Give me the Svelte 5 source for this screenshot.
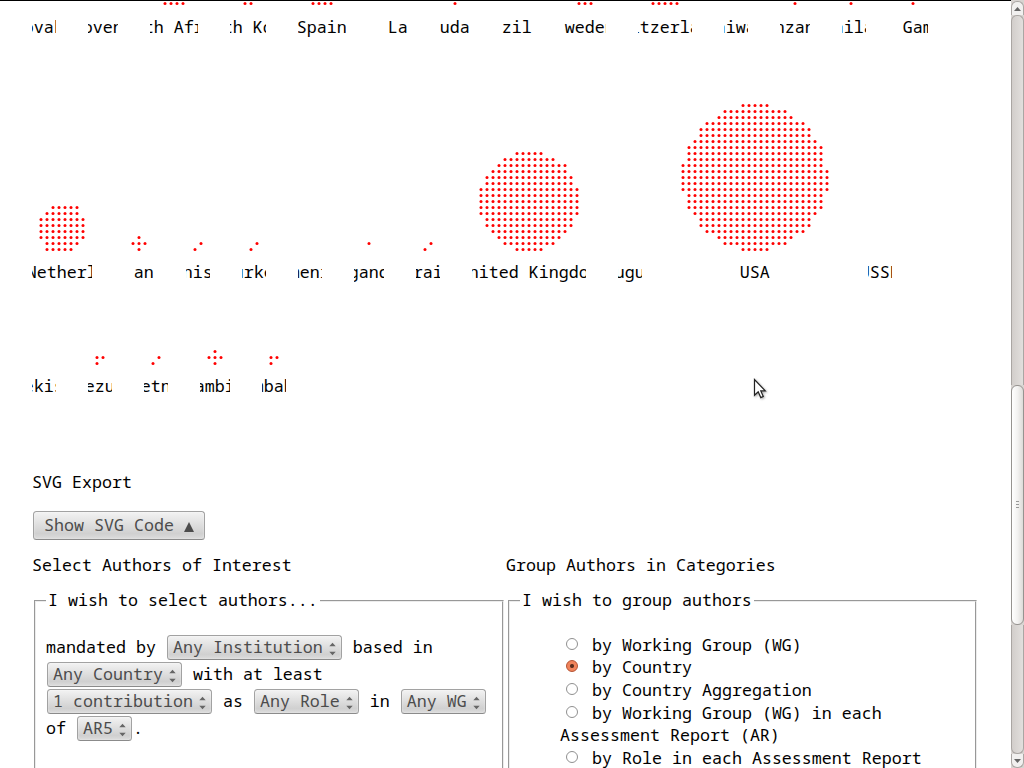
<script>
  // Inclusive column spans of each dot row, from top to bottom.
  const usa = [
    [10, 14], [7, 17], [6, 18], [4, 20], [3, 21], [3, 21], [2, 22], [1, 23], [1, 23], [1, 23],
    [0, 23], [0, 24], [0, 24], [0, 24], [0, 24], [1, 23], [1, 23], [1, 23], [2, 22],
    [3, 21], [3, 21], [4, 20], [6, 18], [7, 17], [10, 14]
  ];
  const uk = [
    [6, 10], [4, 12], [3, 14], [2, 14], [1, 15], [1, 15], [0, 16], [0, 16], [0, 16], [0, 16], [0, 16],
    [1, 15], [1, 15], [2, 14], [3, 13], [4, 12], [6, 10]
  ];
  const netherlands = [[2, 6], [1, 6], [0, 7], [0, 7], [0, 7], [0, 7], [1, 6], [1, 5]];
  const plus = [[1, 1], [0, 2], [1, 1]];
  const slash = [[1, 1], [0, 0]];
  const corner = [[0, 1], [0, 0]];

  const c = (name, width, spans = [], x = 15) => ({ name, width, spans, x });

  const rows = [
    {
      height: 60, baseline: 33, bottom: 3.5,
      items: [
        c('Slovakia', 24), c('Slovenia', 30), c('South Africa', 48, [[0, 3]]),
        c('South Korea', 36, [[0, 1]]), c('Spain', 48, [[0, 3]]), c('Sri Lanka', 30),
        c('Sudan', 30, [[0, 0]]), c('Swaziland', 30), c('Sweden', 42, [[0, 2]]),
        c('Switzerland', 54, [[0, 4]]), c('Taiwan', 24), c('Tanzania', 30, [[0, 0]]),
        c('Thailand', 24, [[0, 0]], 9), c('The Gambia', 30, [[0, 0]])
      ]
    },
    {
      height: 240, baseline: 218, bottom: 189.5,
      items: [
        c('The Netherlands', 60, netherlands, 9), c('Trinidad and Tobago', 30, plus, 9),
        c('Tunisia', 24, slash, 9), c('Turkey', 24, slash, 9), c('Turkmenistan', 24),
        c('Uganda', 30, [[0, 0], [1, 0]]), c('Ukraine', 24, slash, 9),
        c('United Kingdom', 114, uk, 9), c('Uruguay', 24), c('USA', 162, usa, 9), c('USSR', 24)
      ]
    },
    {
      height: 120, baseline: 92, bottom: 63.5,
      items: [
        c('Uzbekistan', 24), c('Venezuela', 24, corner, 9), c('Vietnam', 24, slash, 9),
        c('Zambia', 30, plus, 9), c('Zimbabwe', 24, corner, 9)
      ]
    }
  ];

  function dots(item, bottom) {
    const out = [];
    item.spans.forEach(([from, to], r) => {
      const y = bottom - (item.spans.length - 1 - r) * 6;
      for (let i = from; i <= to; i++) out.push({ x: item.x + i * 6, y });
    });
    return out;
  }

  const groupings = [
    'by Working Group (WG)',
    'by Country',
    'by Country Aggregation',
    'by Working Group (WG) in each Assessment Report (AR)',
    'by Role in each Assessment Report (AR)'
  ];
  let selected = $state(1);
</script>

{#snippet picker(label)}
  <button class="picker">{label}<svg width="7" height="14" viewBox="0 0 7 14"><path d="M0.3 4.2 3.5 0.8 6.7 4.2zM0.3 9.8 3.5 13.2 6.7 9.8z" fill="#666" /></svg></button>
{/snippet}

<div class="window">
  <main>
    {#each rows as row}
      <div class="row">
        {#each row.items as item}
          <svg class="category" width={item.width} height={row.height}>
            {#each dots(item, row.bottom) as dot}
              <circle cx={dot.x} cy={dot.y} r="1.5" />
            {/each}
            <text x={item.width / 2 - 0.3} y={row.baseline}>{item.name}</text>
          </svg>
        {/each}
      </div>
    {/each}

    <h2 class="export">SVG Export</h2>
    <button class="show">Show SVG Code <svg width="10" height="10" viewBox="0 0 10 10"><path d="M0 10 5 0 10 10z" fill="#4c4c4c" /></svg></button>

    <div class="columns">
      <section>
        <h2>Select Authors of Interest</h2>
        <fieldset>
          <legend>I wish to select authors...</legend>
          <div class="sentence">
            <div>mandated by {@render picker('Any Institution')} based in</div>
            <div>{@render picker('Any Country')} with at least</div>
            <div>{@render picker('1 contribution')} as {@render picker('Any Role')} in {@render picker('Any WG')}</div>
            <div>of {@render picker('AR5')}.</div>
          </div>
        </fieldset>
      </section>
      <section>
        <h2>Group Authors in Categories</h2>
        <fieldset>
          <legend>I wish to group authors</legend>
          <div class="options">
            {#each groupings as label, i}
              <label><input type="radio" name="group" checked={selected === i} onchange={() => (selected = i)} /> {label}</label>
            {/each}
          </div>
        </fieldset>
      </section>
    </div>
  </main>

  <div class="scrollbar">
    <div class="cap top"><svg width="7" height="4"><path d="M0 4 3.5 0 7 4z" fill="#666" /></svg></div>
    <div class="track before"></div>
    <div class="thumb"><i></i><i></i><i></i></div>
    <div class="track after"></div>
    <div class="cap end"><svg width="7" height="4"><path d="M0 0 3.5 4 7 0z" fill="#666" /></svg></div>
  </div>

  <svg class="cursor" width="14" height="22" viewBox="0 0 14 22">
    <path d="M1.5 1.5V17.3L5.2 13.8 7.8 19.6 10.3 18.4 7.8 12.9H12.3z" fill="#fff" stroke="#222" stroke-width="1.2" />
  </svg>
</div>

<style>
  :global(body) {
    overflow: hidden;
    background: #fff;
  }
  .window {
    position: relative;
    box-sizing: border-box;
    display: flex;
    width: 1024px;
    height: 768px;
    overflow: hidden;
    box-shadow: inset 0 1px #000;
    color: #000;
    font: 16.66px/22px "Droid Sans Mono", "Noto Sans Mono", "DejaVu Sans Mono", monospace;
  }
  main {
    flex: 1;
    min-width: 0;
    padding-left: 32px;
  }
  .row {
    display: flex;
    gap: 32px;
  }
  .category {
    flex: none;
    overflow: hidden;
  }
  .category text {
    text-anchor: middle;
  }
  circle {
    fill: #f00;
  }
  h2 {
    margin: 0;
    font-size: inherit;
    font-weight: normal;
    line-height: 22px;
  }
  .export {
    margin-top: 51px;
  }
  button {
    box-sizing: border-box;
    border: 1px solid #a2a2a2;
    border-bottom-color: #8b8b8b;
    border-radius: 3.5px;
    background: linear-gradient(#f3f3f3, #dedede 48%, #d0d0d0 80%, #dcdcdc);
    box-shadow: inset 0 0 2px #fff9;
    color: #4c4c4c;
    font: inherit;
    white-space: pre;
  }
  .show {
    display: block;
    width: 172px;
    height: 29px;
    margin: 18px 0 14px 1px;
    padding: 0 0 2px 10px;
    line-height: 25px;
    text-align: left;
  }
  .show svg {
    vertical-align: -1px;
  }
  .columns {
    display: flex;
    gap: 4px;
  }
  section {
    width: 470px;
  }
  fieldset {
    box-sizing: border-box;
    width: 470px;
    height: 260px;
    min-width: 0;
    margin: 13px 0 0 2px;
    padding: 0 10px;
    border: 2px groove #ececec;
  }
  section + section fieldset {
    width: 469px;
  }
  legend {
    padding: 0 2px 2px;
    line-height: 22px;
  }
  .sentence {
    margin-top: 20px;
  }
  .sentence div {
    height: 27px;
    line-height: 27px;
    white-space: pre;
  }
  .picker {
    height: 25px;
    margin: 0 1px;
    padding: 0 5px;
    line-height: 22px;
    vertical-align: baseline;
  }
  .picker svg {
    margin-left: 6px;
    vertical-align: -3px;
  }
  .options {
    margin: 20.8px 0 0 40px;
    line-height: 22.6px;
  }
  label {
    display: block;
  }
  input {
    box-sizing: border-box;
    appearance: none;
    width: 12px;
    height: 12px;
    margin: 0 4px 0 6px;
    border: 1px solid #909090;
    border-radius: 50%;
    background: #fff;
    vertical-align: 1px;
  }
  input:checked {
    border-color: #b4502f;
    background: radial-gradient(circle, #5a2c1c 0 1.5px, #f0835b 2.5px);
  }
  .scrollbar {
    box-sizing: border-box;
    display: flex;
    flex-direction: column;
    width: 13px;
    padding-top: 1px;
    background: #d8d4d1;
  }
  .cap {
    box-sizing: border-box;
    display: flex;
    align-items: center;
    justify-content: center;
    height: 14px;
    border: 1px solid #aaa6a3;
    background: #f1f0ef;
  }
  .top {
    border-radius: 6px 6px 0 0;
    border-bottom: 0;
  }
  .end {
    border-radius: 0 0 6px 6px;
    border-top: 0;
  }
  .track {
    box-sizing: border-box;
    border: 1px solid #aaa6a3;
    background: linear-gradient(90deg, #d2cecb, #e2dfdd);
  }
  .before {
    height: 370px;
    border-radius: 6px 6px 0 0;
    border-bottom: 0;
  }
  .after {
    flex: 1;
    border-radius: 0 0 6px 6px;
    border-top: 0;
  }
  .thumb {
    box-sizing: border-box;
    display: flex;
    flex-direction: column;
    align-items: center;
    justify-content: center;
    gap: 2px;
    height: 240px;
    padding-bottom: 2px;
    border: 1px solid #969390;
    border-radius: 6px;
    background: linear-gradient(90deg, #fff, #f3f2f1 50%, #dddbd8);
  }
  .thumb i {
    width: 3px;
    height: 1px;
    background: #999;
  }
  .cursor {
    position: absolute;
    left: 753px;
    top: 378px;
    filter: drop-shadow(1px 1px 1px #0005);
  }
</style>
